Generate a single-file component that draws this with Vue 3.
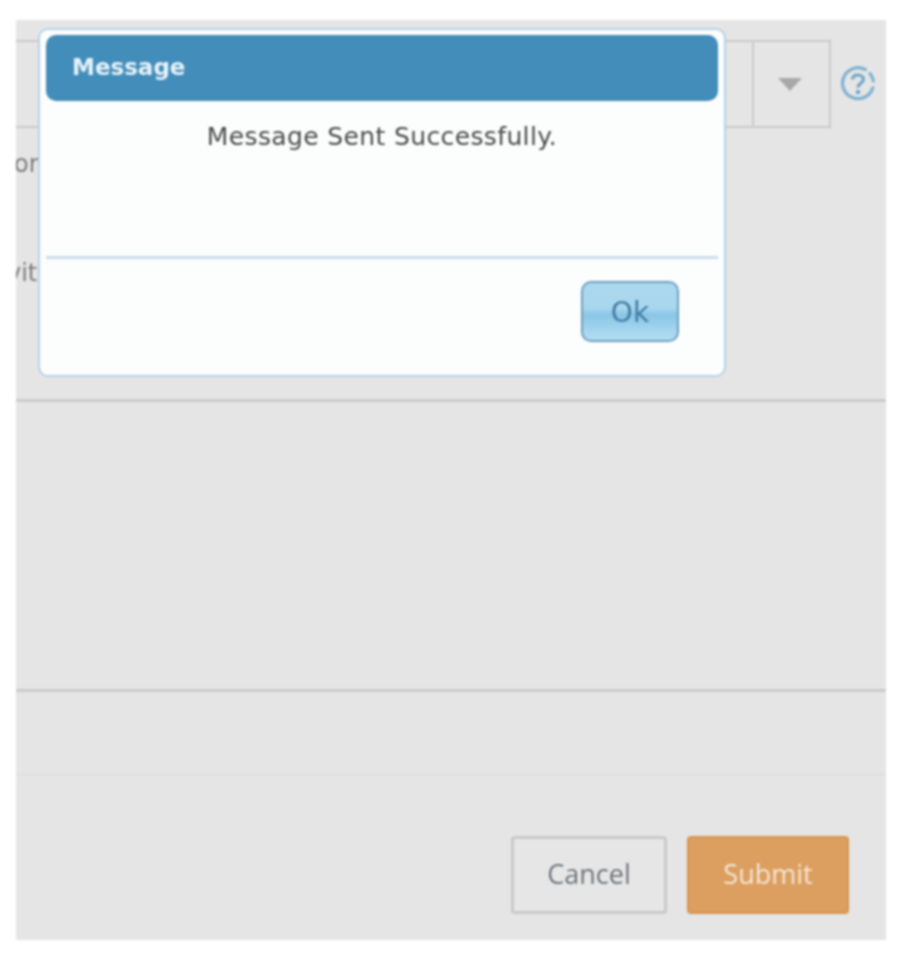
<script setup>
const labels = [
  { text: 'or', cls: 'label-or' },
  { text: 'vit', cls: 'label-vit' }
]
</script>

<template>
  <div class="page">
    <div class="panel">
      <div class="select-row">
        <div class="select">
          <div class="select-value"></div>
          <div class="select-arrow"><span class="caret"></span></div>
        </div>
        <svg class="help" viewBox="0 0 36 36" width="36" height="36" aria-hidden="true">
          <path d="M25.500 4.600A15.500 15.500 0 1 0 32.800 23" fill="none" stroke="#7fb2d0" stroke-width="3.200" stroke-linecap="round" />
          <path d="M30 8.500A15.500 15.500 0 0 1 33.400 16" fill="none" stroke="#7fb2d0" stroke-width="3.200" stroke-linecap="round" />
          <path d="M12.500 14.500C12.500 11.500 15 10 18 10S23.500 11.800 23.500 14.500C23.500 18 18 18 18 22.500" fill="none" stroke="#6fa8ca" stroke-width="3.200" />
          <circle cx="18" cy="27" r="2.300" fill="#6fa8ca" />
        </svg>
      </div>
      <div class="fields">
        <div v-for="l in labels" :key="l.text" class="field-label" :class="l.cls">{{ l.text }}</div>
      </div>
      <div class="band band-one"></div>
      <div class="band band-two"></div>
      <div class="actions">
        <button class="btn cancel">Cancel</button>
        <button class="btn submit">Submit</button>
      </div>

      <div class="dialog">
        <div class="dialog-head">Message</div>
        <div class="dialog-body">Message Sent Successfully.</div>
        <div class="dialog-foot">
          <button class="ok">Ok</button>
        </div>
      </div>
    </div>
  </div>
</template>

<style scoped>
.page {
  width: 906px;
  height: 960px;
  padding: 20px 20px 20px 16px;
  box-sizing: border-box;
  background: #ffffff;
  filter: blur(1px);
}
.panel {
  position: relative;
  width: 870px;
  height: 920px;
  background: #e5e5e5;
  overflow: hidden;
  font-family: "Open Sans", sans-serif;
}
.select-row {
  display: flex;
  align-items: center;
  padding-top: 20px;
}
.select {
  display: flex;
  width: 815px;
  height: 88px;
  box-sizing: border-box;
  border: 2px solid #c9c9c9;
  border-left: 0;
}
.select-value {
  flex: 1;
}
.select-arrow {
  width: 77px;
  border-left: 2px solid #c9c9c9;
  display: flex;
  align-items: center;
  justify-content: center;
  padding-right: 3px;
  box-sizing: border-box;
}
.caret {
  width: 0;
  height: 0;
  border-left: 12px solid transparent;
  border-right: 12px solid transparent;
  border-top: 13px solid #a8a8a8;
}
.help {
  margin-left: 9px;
  margin-top: -2px;
}
.fields {
  height: 252px;
  box-sizing: border-box;
  color: #7d7d7d;
  font-size: 24px;
  font-family: "DejaVu Sans", sans-serif;
}
.field-label {
  height: 34px;
  line-height: 34px;
}
.label-or {
  margin-top: 19px;
  margin-left: -2px;
}
.label-vit {
  margin-top: 75px;
  margin-left: -9px;
}
.band {
  box-sizing: border-box;
}
.band-one {
  height: 290px;
  border-top: 3px solid #cbcbcb;
}
.band-two {
  height: 86px;
  border-top: 3px solid #cbcbcb;
  border-bottom: 1px solid #dadada;
}
.actions {
  display: flex;
  justify-content: flex-end;
  gap: 20px;
  padding: 61px 37px 0 0;
}
.btn {
  height: 78px;
  box-sizing: border-box;
  border-radius: 4px;
  font-family: "Open Sans", sans-serif;
  font-size: 27px;
  padding: 0 0 4px;
}
.cancel {
  width: 156px;
  background: #e6e6e6;
  border: 3px solid #c9c9c9;
  color: #6f7479;
}
.submit {
  width: 162px;
  background: #dc9f60;
  border: 2px solid #d69550;
  color: #f5e6d6;
}
.dialog {
  position: absolute;
  left: 22px;
  top: 8px;
  width: 688px;
  height: 349px;
  box-sizing: border-box;
  padding: 5px 6px 6px;
  background: #fcfdfd;
  border: 2px solid #b6d2e7;
  border-radius: 10px;
  display: flex;
  flex-direction: column;
}
.dialog-head {
  height: 66px;
  line-height: 65px;
  padding-left: 26px;
  background: #438dbb;
  border-radius: 10px;
  color: #e6f3f9;
  font-family: "DejaVu Sans", sans-serif;
  font-weight: 700;
  font-size: 23px;
}
.dialog-body {
  height: 158px;
  box-sizing: border-box;
  padding-top: 20px;
  text-align: center;
  color: #4a4a4a;
  font-family: "DejaVu Sans", sans-serif;
  font-size: 25px;
  letter-spacing: 0.37px;
  line-height: 32px;
  border-bottom: 3px solid #cbdeed;
}
.dialog-foot {
  display: flex;
  justify-content: flex-end;
  padding: 22px 39px 0 0;
}
.ok {
  width: 98px;
  height: 61px;
  box-sizing: border-box;
  padding: 2px 0 0;
  border: 2px solid #6f9fbe;
  border-radius: 10px;
  background: linear-gradient(#abd8ef 0%, #a9d7ee 44%, #8ac6e6 56%, #b4def3 100%);
  color: #3f7ca3;
  font-family: "DejaVu Sans", sans-serif;
  font-size: 28px;
}
</style>
